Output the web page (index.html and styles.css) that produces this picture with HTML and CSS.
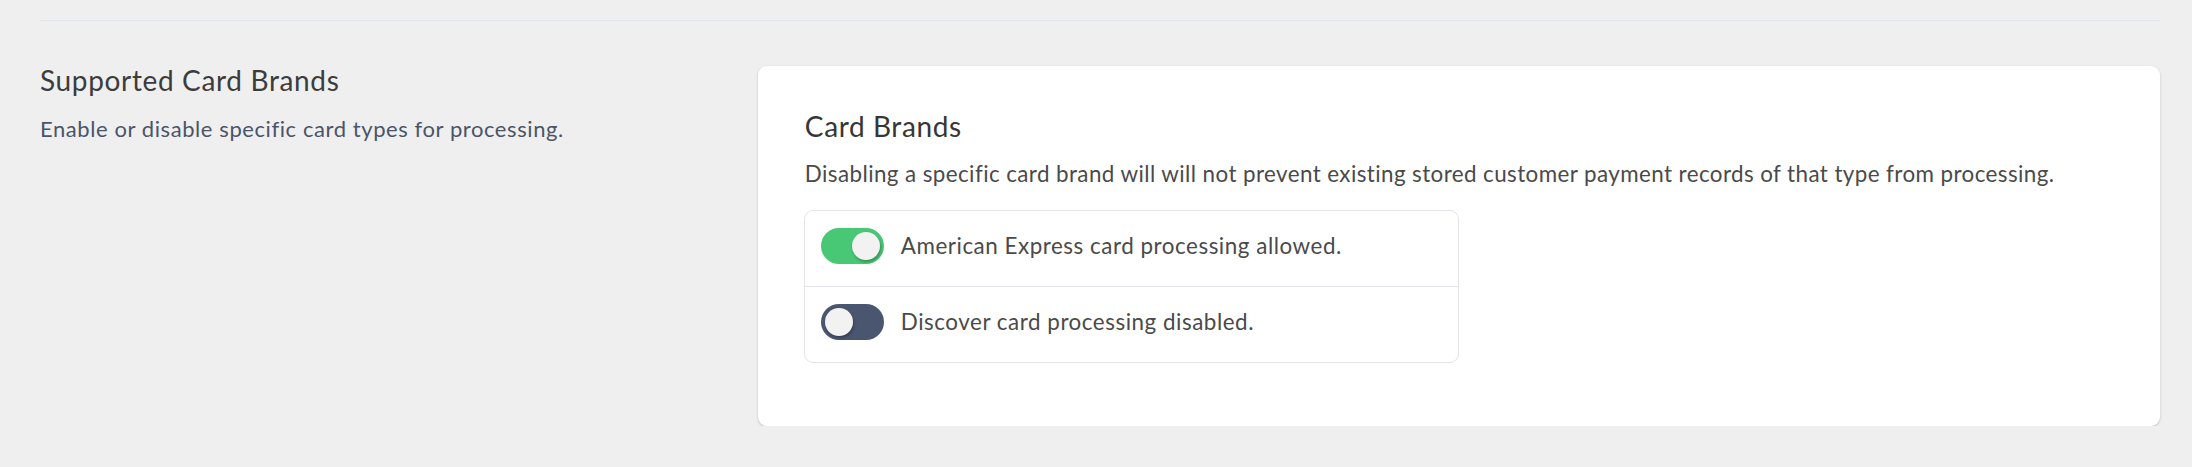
FILE: index.html
```html
<!DOCTYPE html>
<html lang="en">
<head>
<meta charset="utf-8">
<title>Supported Card Brands</title>
<link rel="stylesheet" href="styles.css">
</head>
<body>
<div class="page">
  <hr class="divider">
  <section class="settings">
    <div class="intro">
      <h2 class="intro-title">Supported Card Brands</h2>
      <p class="intro-text">Enable or disable specific card types for processing.</p>
    </div>
    <div class="card">
      <h3 class="card-title">Card Brands</h3>
      <p class="card-text">Disabling a specific card brand will will not prevent existing stored customer payment records of that type from processing.</p>
      <ul class="brand-list">
        <li class="brand-row">
          <span class="toggle is-on"><span class="knob"></span></span>
          <span class="brand-label">American Express card processing allowed.</span>
        </li>
        <li class="brand-row">
          <span class="toggle"><span class="knob"></span></span>
          <span class="brand-label">Discover card processing disabled.</span>
        </li>
      </ul>
    </div>
  </section>
</div>
</body>
</html>
```

FILE: styles.css
```css
* { box-sizing: border-box; }

html, body {
  margin: 0;
  padding: 0;
  background: #efefef;
}

body {
  font-family: "Lato", "Noto Sans", "DejaVu Sans", sans-serif;
  color: #4a4a4a;
}

.page {
  padding: 0 32px 0 40px;
}

.divider {
  margin: 0;
  padding-top: 20px;
  border: 0;
  border-bottom: 1px solid #e2e7ee;
  height: 0;
}

.settings {
  margin-top: 45px;
  display: grid;
  grid-template-columns: repeat(3, 1fr);
  column-gap: 33.6px;
  align-items: start;
}

.intro {
  display: flex;
  flex-direction: column;
}

.intro-title {
  margin: 0;
  font-size: 28px;
  line-height: 28px;
  font-weight: 400;
  letter-spacing: 0.65px;
  color: #3c3c3c;
}

.intro-text {
  margin: 20px 0 0;
  font-size: 22px;
  line-height: 30px;
  letter-spacing: 0.58px;
  color: #4a5568;
}

.card {
  grid-column: span 2;
  background: #ffffff;
  border-radius: 9px;
  box-shadow: 0 1px 3px rgba(0, 0, 0, 0.16), 0 1px 1px rgba(0, 0, 0, 0.05);
  padding: 46px 47px 63px;
  display: flex;
  flex-direction: column;
  align-items: flex-start;
}

.card-title {
  margin: 0;
  font-size: 28px;
  line-height: 28px;
  font-weight: 400;
  letter-spacing: 0.6px;
  color: #363636;
}

.card-text {
  margin: 18px 0 0;
  font-size: 22.4px;
  line-height: 32px;
  letter-spacing: 0.41px;
  color: #4a4a4a;
}

.brand-list {
  list-style: none;
  margin: 20px 0 0 -1px;
  padding: 0;
  width: 655px;
  border: 1px solid #e3e5ea;
  border-radius: 9px;
}

.brand-row {
  display: flex;
  align-items: center;
  gap: 17px;
  padding: 17px 16px 22px;
}

.brand-row + .brand-row {
  border-top: 1px solid #e3e5ea;
}

.toggle {
  flex: none;
  display: flex;
  align-items: center;
  width: 63px;
  height: 36px;
  padding: 4px;
  border-radius: 18px;
  background: #4a5670;
}

.toggle.is-on {
  background: #48c774;
  justify-content: flex-end;
}

.knob {
  width: 28px;
  height: 28px;
  border-radius: 50%;
  background: #f2f2f2;
  box-shadow: 1px 2px 3px rgba(0, 0, 0, 0.28);
}

.brand-label {
  font-size: 22.4px;
  line-height: 30px;
  letter-spacing: 0.53px;
  color: #4a4a4a;
}
```
